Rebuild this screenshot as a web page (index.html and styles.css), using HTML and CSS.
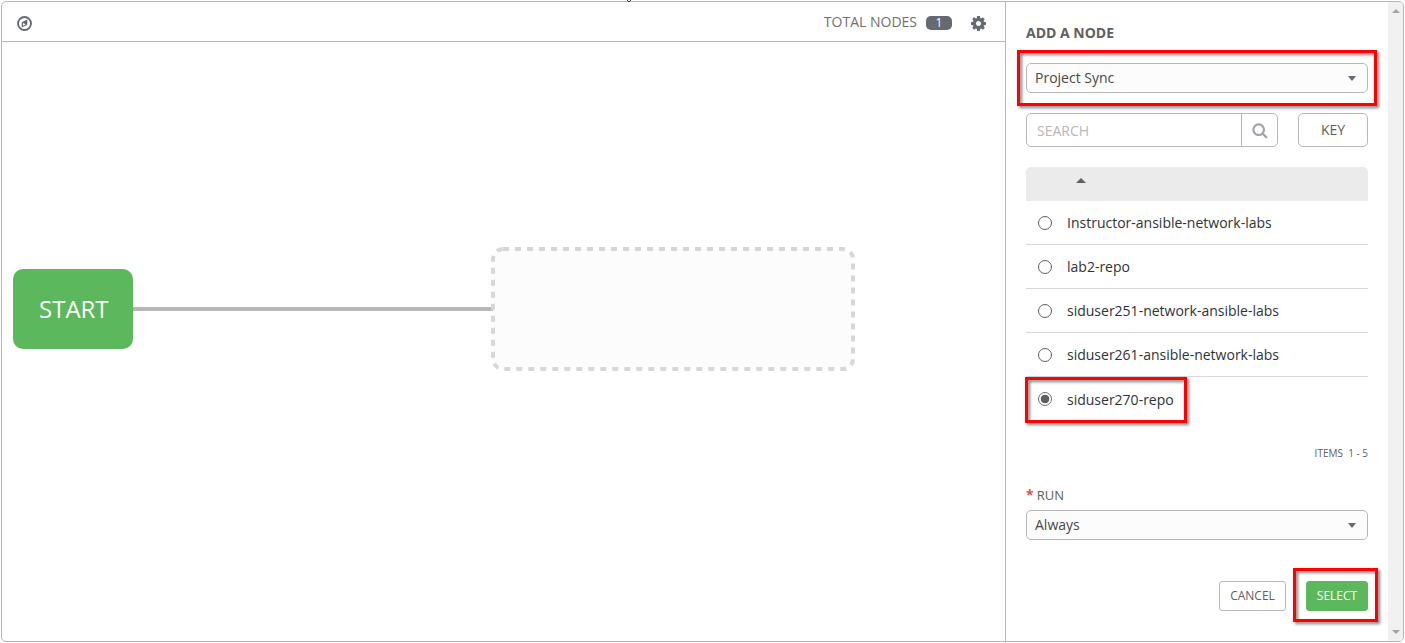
FILE: index.html
```html
<!DOCTYPE html>
<html lang="en">
<head>
<meta charset="utf-8">
<title>Workflow Visualizer</title>
<link rel="stylesheet" href="styles.css">
</head>
<body>
<svg class="speck" viewBox="0 0 4 2"><path d="M0 0h1v1H0zM1 1h2v1H1zM3 0h1v1H3z"/></svg>
<div class="visualizer">
  <main class="graph">
    <header class="toolbar">
      <svg class="compass" viewBox="0 0 16 16"><circle cx="8" cy="8" r="6.900" fill="none" stroke="currentColor" stroke-width="2"/><path fill="currentColor" fill-rule="evenodd" d="M11 3.600v5.600L5 12.300V6.700zM6.300 7.500v3l3-1.600z"/></svg>
      <div class="totals">
        <span class="totals-label">TOTAL NODES</span>
        <span class="badge">1</span>
        <svg class="gear" viewBox="0 0 1536 1536"><path fill="currentColor" d="M1024 768q0-106-75-181t-181-75-181 75-75 181 75 181 181 75 181-75 75-181zm512-109v222q0 12-8 23t-20 13l-185 28q-19 54-39 91 35 50 107 138 10 12 10 25t-9 23q-27 37-99 108t-94 71q-12 0-26-9l-138-108q-44 23-91 38-16 136-29 186-7 28-36 28H657q-14 0-24.500-8.500T621 1506l-28-184q-49-16-90-37l-141 107q-10 9-25 9-14 0-25-11-126-114-165-168-7-10-7-23 0-12 8-23 15-21 51-66.500t54-70.500q-27-50-41-99L29 913q-13-2-21-12.500T0 877V655q0-12 8-23t19-13l186-28q14-46 39-92-40-57-107-138-10-12-10-24 0-10 9-23 26-36 98.500-107.500T337 135q13 0 26 10l138 107q44-23 91-38 16-136 29-186 7-28 36-28h222q14 0 24.500 8.500T915 30l28 184q49 16 90 37l142-107q9-9 24-9 13 0 25 10 129 119 165 170 7 8 7 22 0 12-8 23-15 21-51 66.500t-54 70.500q26 50 41 98l183 28q13 2 21 12.500t8 23.500z"/></svg>
      </div>
    </header>
    <svg class="canvas" viewBox="2 42 1003 599">
      <path class="link" d="M133 309H493"/>
      <rect class="start" x="13" y="269" width="120" height="80" rx="10"/>
      <text class="start-text" x="39" y="318">START</text>
      <rect class="placeholder" x="493" y="249" width="360" height="120" rx="10"/>
    </svg>
  </main>
  <aside class="panel">
    <h2 class="title">ADD A NODE</h2>
    <div class="select">Project Sync<i class="caret"></i></div>
    <div class="search-row">
      <div class="search">
        <span class="search-input">SEARCH</span>
        <span class="search-button"><svg viewBox="0 0 16 16"><circle cx="6.700" cy="6.700" r="5.300"/><path d="M10.400 10.400l4.500 4.500"/></svg></span>
      </div>
      <div class="key">KEY</div>
    </div>
    <div class="list-head"><i class="sort"></i></div>
    <ul class="list">
      <li><i class="radio"></i>Instructor-ansible-network-labs</li>
      <li><i class="radio"></i>lab2-repo</li>
      <li><i class="radio"></i>siduser251-network-ansible-labs</li>
      <li><i class="radio"></i>siduser261-ansible-network-labs</li>
      <li class="chosen"><i class="radio checked"></i><span>siduser270-repo</span></li>
    </ul>
    <div class="items">ITEMS&nbsp; 1 - 5</div>
    <div class="run"><b>*</b>RUN</div>
    <div class="select">Always<i class="caret"></i></div>
    <div class="actions">
      <div class="button cancel">CANCEL</div>
      <div class="button confirm">SELECT</div>
    </div>
  </aside>
  <div class="scrollbar"><i class="arrow up"></i><i class="arrow down"></i></div>
</div>
<div class="mark mark-type"></div>
<div class="mark mark-repo"></div>
<div class="mark mark-select"></div>
</body>
</html>
```

FILE: styles.css
```css
* { box-sizing: border-box; }
body {
  margin: 0;
  height: 643px;
  padding: 1px;
  position: relative;
  overflow: hidden;
  background: #fff;
  color: #606060;
  font: 14px/20px "Open Sans", sans-serif;
}
svg { display: block; }
.speck { position: absolute; left: 627px; top: 0; width: 4px; height: 2px; fill: #333; }
.visualizer {
  display: flex;
  width: 1403px;
  height: 641px;
  border: 1px solid #b7b7b7;
  border-radius: 5px;
  overflow: hidden;
}
.graph { width: 1003px; display: flex; flex-direction: column; }
.toolbar {
  height: 40px;
  display: flex;
  align-items: center;
  justify-content: space-between;
  padding: 1px 19px 0 15px;
  border-bottom: 1px solid #b7b7b7;
}
.compass { width: 15px; height: 15px; color: #646972; margin-top: 2px; }
.totals { display: flex; align-items: center; color: #707070; }
.badge {
  width: 26px;
  height: 14px;
  margin: 1px 19px 0 9px;
  border-radius: 5px;
  background: #646972;
  color: #fff;
  font-size: 12px;
  line-height: 14px;
  text-align: center;
}
.gear { width: 15px; height: 15px; color: #646972; margin-top: 2px; }
.canvas { width: 1003px; height: 599px; }
.link { stroke: #b7b7b7; stroke-width: 4; }
.start { fill: #5cb85c; }
.start-text { fill: #fff; font-size: 24px; }
.placeholder { fill: #fcfcfc; stroke: #d7d7d7; stroke-width: 4; stroke-dasharray: 6; }
.panel { width: 383px; border-left: 1px solid #b7b7b7; padding: 21px 20px 0; }
.title { margin: 0 0 20px; font-size: 14px; line-height: 20px; font-weight: 700; color: #606060; }
.select {
  height: 30px;
  display: flex;
  align-items: center;
  justify-content: space-between;
  padding: 0 11px 0 8px;
  border: 1px solid #b7b7b7;
  border-radius: 5px;
  background: #fcfcfc;
  color: #484848;
}
.caret { border: 4px solid transparent; border-top: 5px solid #646972; border-bottom: 0; margin-top: 1px; }
.search-row { display: flex; justify-content: space-between; margin: 20px 0; height: 34px; }
.search { display: flex; width: 252px; border: 1px solid #b7b7b7; border-radius: 5px; }
.search-input { width: 214px; padding: 7px 10px; color: #b7b7b7; }
.search-button { flex: 1; display: flex; align-items: center; justify-content: center; border-left: 1px solid #b7b7b7; }
.search-button svg { width: 16px; height: 16px; fill: none; stroke: #a0a4aa; stroke-width: 2.2; margin-top: 2px; }
.key { width: 70px; border: 1px solid #b7b7b7; border-radius: 5px; line-height: 32px; text-align: center; }
.list-head { height: 34px; padding: 11px 0 0 50px; background: #ebebeb; border-radius: 5px 5px 0 0; }
.sort { display: block; width: 10px; border: 5px solid transparent; border-bottom: 5px solid #606060; border-top: 0; }
.list { list-style: none; margin: 0; padding: 0; }
.list li { height: 44px; display: flex; align-items: center; padding-left: 12px; border-bottom: 1px solid #d7d7d7; color: #2d3338; }
.list .chosen { border-bottom-color: transparent; }
.chosen span { margin-top: 2px; }
.radio { width: 14px; height: 14px; margin-right: 15px; margin-top: 1px; border: 1px solid #606060; border-radius: 50%; }
.checked { border-color: #707070; background: radial-gradient(circle, #606060 4px, #fff 4.600px); }
.items { margin-top: 22px; font-size: 10px; line-height: 20px; text-align: right; }
.run { display: flex; align-items: center; gap: 3px; height: 20px; margin: 22px 0 5px; font-size: 13px; }
.run b { color: #d9534f; font-size: 14px; }
.actions { display: flex; justify-content: flex-end; gap: 20px; margin-top: 41px; }
.button { height: 30px; border-radius: 3px; font-size: 12px; text-align: center; line-height: 28px; }
.cancel { width: 67px; border: 1px solid #b7b7b7; }
.confirm { width: 62px; border: 1px solid #5cb85c; background: #5cb85c; color: #fff; }
.scrollbar { flex: 1; display: flex; flex-direction: column; justify-content: space-between; align-items: center; padding: 7px 0; padding-left: 1px; background: #f1f1f1; }
.arrow { border: 4px solid transparent; }
.up { border-top: 0; border-bottom-color: #a3a3a3; }
.down { border-bottom: 0; border-top-color: #a3a3a3; }
.mark { position: absolute; border: 3px solid #f00; filter: drop-shadow(2px 2px 1.500px rgba(0, 0, 0, .5)); }
.mark-type { left: 1017px; top: 50px; width: 360px; height: 56px; }
.mark-repo { left: 1025px; top: 377px; width: 162px; height: 46px; }
.mark-select { left: 1293px; top: 568px; width: 85px; height: 54px; }
```
